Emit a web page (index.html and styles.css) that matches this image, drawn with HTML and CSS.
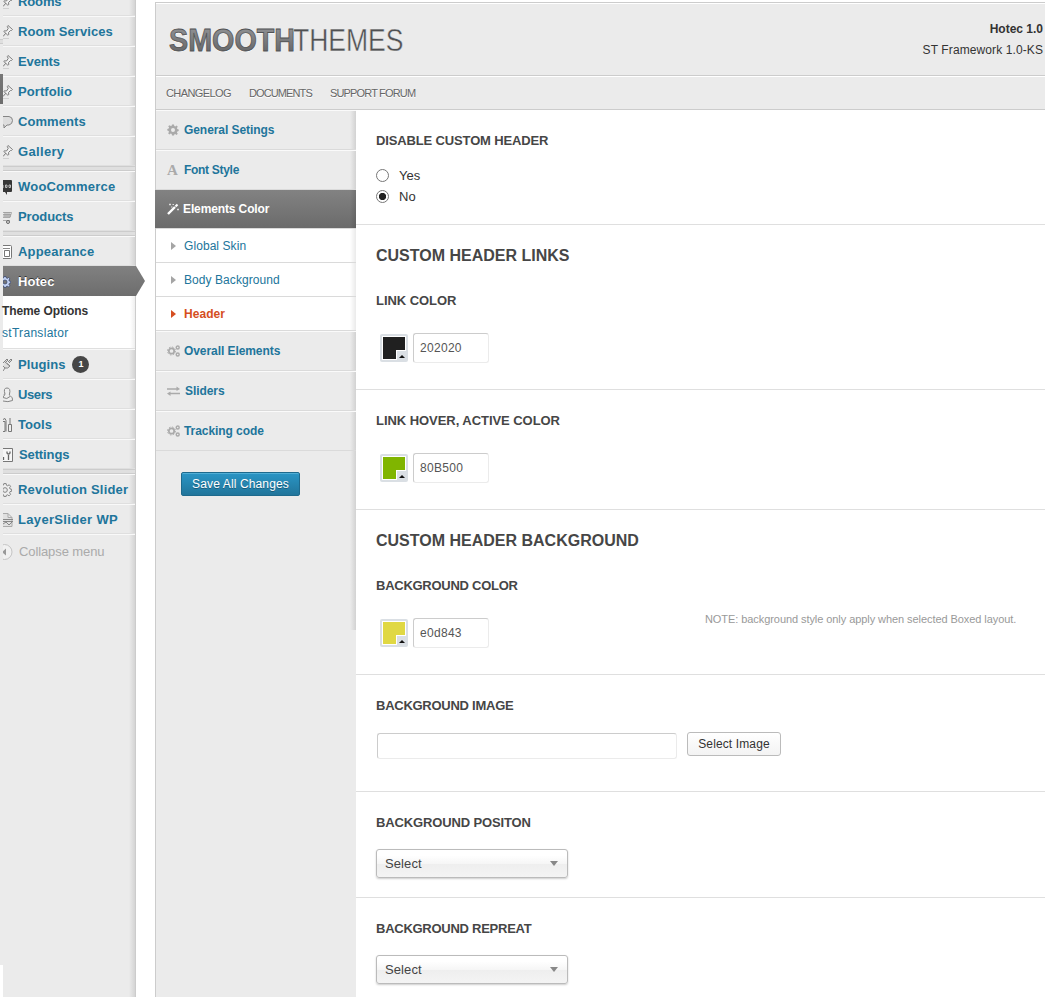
FILE: index.html
```html
<!DOCTYPE html>
<html lang="en">
<head>
<meta charset="utf-8">
<title>Theme Options</title>
<link rel="stylesheet" href="styles.css">
</head>
<body>
<svg class="defs" width="0" height="0">
  <defs>
    <linearGradient id="metal" x1="0" y1="0" x2="0" y2="1"><stop offset="0" stop-color="#98999c"/><stop offset="1" stop-color="#5c5d5f"/></linearGradient>
    <symbol id="pin" viewBox="0 0 12 16"><path d="M3 9L0 12.500" stroke="#777"/><path d="M5 1.500l4.500 4-1 1L7.500 6.500 5.500 8.500l.3 2-1 .7L.8 7.500l.5-.7 2.200.2L5.200 4.500 4.300 2.500z" fill="#f2f2f2" stroke="#7d7d7d"/><path d="M0 14.500h6" stroke="#d0d0d0"/></symbol>
    <symbol id="cog" viewBox="0 0 12 12"><path fill-rule="evenodd" d="M5 .5h2l.3 1.500 1 .4 1.300-.9 1.200 1.300-.9 1.300.4 1 1.400.3v1.700l-1.400.3-.4 1 .9 1.300-1.300 1.300-1.300-.9-1 .4L7 11.500H5l-.3-1.500-1-.4-1.300.9-1.300-1.300.9-1.300-.4-1L.3 6.600V5l1.400-.4.4-1-.9-1.300L2.500 1.200l1.300.9.9-.3zM6 4a2 2 0 100 4 2 2 0 000-4z"/></symbol>
    <symbol id="cogs" viewBox="0 0 13 12"><circle cx="4.500" cy="6" r="2.700" fill="none" stroke="#aaa" stroke-width="1.700"/><circle cx="4.500" cy="6" r="4" fill="none" stroke="#aaa" stroke-width="1" stroke-dasharray="1.600 1.540"/><circle cx="10.700" cy="2.500" r="1.500" fill="none" stroke="#aaa" stroke-width="1.400"/><circle cx="10.700" cy="9.500" r="1.500" fill="none" stroke="#aaa" stroke-width="1.400"/></symbol>
  </defs>
</svg>
<div class="page">
  <div class="edge"></div>
  <nav class="menu">
    <a class="item"><svg class="ic"><use href="#pin"/></svg><span class="tight">Rooms</span></a>
    <a class="item"><svg class="ic"><use href="#pin"/></svg><span>Room Services</span></a>
    <a class="item"><svg class="ic"><use href="#pin"/></svg><span class="tight">Events</span></a>
    <a class="item"><svg class="ic"><use href="#pin"/></svg><span>Portfolio</span></a>
    <a class="item"><svg class="ic" viewBox="0 0 12 16"><path d="M0 2.500h6q3.500.5 3.500 4t-3.500 4.500H4L1 14V11H0" fill="#ddd" stroke="#858585"/></svg><span>Comments</span></a>
    <a class="item"><svg class="ic"><use href="#pin"/></svg><span class="loose">Gallery</span></a>
    <div class="sep"></div>
    <a class="item"><svg class="ic" viewBox="0 0 12 16"><path d="M0 1h8q1 0 1 1v10q0 1-1 1H4v3l-2-3H0z" fill="#363636"/><path d="M0 6v3M2.500 6h1.500v2.500h-1.500zM6 6h1.500v2.500H6z" fill="none" stroke="#ccc" stroke-width=".9"/></svg><span class="mid">WooCommerce</span></a>
    <a class="item"><svg class="ic" viewBox="0 0 12 16"><path d="M0 3.500h8.500L7 8.500H0M0 5.500h8M0 7h8M2 3v5M4 3v5M6 3v5M0 11.500h7" fill="none" stroke="#999" stroke-width=".8"/><circle cx="5" cy="13" r="1.500" fill="#ddd" stroke="#666"/></svg><span class="tight">Products</span></a>
    <div class="sep"></div>
    <a class="item"><svg class="ic" viewBox="0 0 12 16"><path d="M0 1.500h7.500q1 0 1 1v11q0 1-1 1H0" fill="#fff" stroke="#777"/><path d="M0 4.500h7" stroke="#888"/><path d="M1.500 6.500h5v6h-5z" fill="#fff" stroke="#777"/></svg><span class="mid">Appearance</span></a>
    <a class="item current"><svg class="ic" viewBox="4 -2 12 16"><use href="#cog" width="12" height="12" fill="#c3d3f5" stroke="#33446c" stroke-width=".7"/></svg><span>Hotec</span></a>
    <div class="submenu"><b>Theme Options</b><span>stTranslator</span></div>
    <a class="item"><svg class="ic" viewBox="0 0 12 16"><path d="M0 6l4-4 1 1-2 2M5 5l3-3 1 1-3 3M2 5l5 4q-2 3-5 2l-2-2M2 11l-2 3M4 6.500l3 2.500" fill="#ddd" stroke="#858585"/></svg><span>Plugins</span><i class="badge">1</i></a>
    <a class="item"><svg class="ic" viewBox="0 0 12 16"><path d="M1 8q0-1 1-1Q0 1 4 1t2.500 6q-1 1 1 2 2.500 1.500 2 4.500-4.500 2-9.500.5M0 10l2-2.500M0 10.500q4 2.500 7-1" fill="#eee" stroke="#858585"/></svg><span class="tighter">Users</span></a>
    <a class="item"><svg class="ic" viewBox="0 0 12 16"><path d="M0 2.500l2-1 1 2v11M0 4.500h2v10H0M7 1v6M5.500 7.500h3v7h-3z" fill="#eee" stroke="#777"/></svg><span>Tools</span></a>
    <a class="item"><svg class="ic" viewBox="0 0 12 16"><path d="M0 1.500h9.500v13H0" fill="#f6f6f6" stroke="#777"/><path d="M.5 10v3M5.500 8v5M4 4.500v1q0 1.500 1.500 1.500T7 5.500v-1" fill="none" stroke="#666" stroke-width="1.300"/></svg><span class="tight shift">Settings</span></a>
    <div class="sep"></div>
    <a class="item"><svg class="ic" viewBox="5 -2 12 16"><use href="#cog" x="0" y="-1" width="14" height="14" fill="#eee" stroke="#7d7d7d" stroke-width=".8"/></svg><span class="mid">Revolution Slider</span></a>
    <a class="item"><svg class="ic" viewBox="0 0 12 16"><path d="M0 1.500h5l4 4v9H0M5 1.500v4h4" fill="#e0e0e0" stroke="#aaa"/><path d="M0 7.500h10M0 9.500h10M0 12l3-2 3 3 3-3" fill="none" stroke="#888"/></svg><span class="loose">LayerSlider WP</span></a>
    <div class="collapse"><svg class="ic" viewBox="0 0 12 16"><circle cx="1.500" cy="8" r="7.500" fill="#f1f1f1" stroke="#c4c4c4"/><path d="M-1 8l4-3.500v7z" fill="#999"/></svg><span>Collapse menu</span></div>
  </nav>
  <main class="panel">
    <header class="head">
      <svg class="logo" width="240" height="36" viewBox="0 0 240 36">
        <g font-family="Liberation Sans, Arial, sans-serif" font-size="31">
          <g fill="#fff" transform="translate(0 1)"><text x="1" y="27" font-weight="700" textLength="126" lengthAdjust="spacingAndGlyphs">SMOOTH</text></g>
          <text x="1" y="27" font-weight="700" textLength="126" lengthAdjust="spacingAndGlyphs" fill="url(#metal)" stroke="#505153" stroke-width=".8">SMOOTH</text>
          <text x="125" y="27" textLength="110.500" lengthAdjust="spacingAndGlyphs" fill="#505153" stroke="#ebebeb" stroke-width=".4">THEMES</text>
        </g>
      </svg>
      <div class="version"><b>Hotec 1.0</b><span>ST Framework 1.0-KS</span></div>
    </header>
    <div class="links"><a class="l1">CHANGELOG</a><a class="l2">DOCUMENTS</a><a class="l3">SUPPORT FORUM</a></div>
    <div class="body">
      <aside class="side">
        <a class="tab"><svg class="ti" viewBox="0 0 12 12" fill="#aaa"><use href="#cog"/></svg><span>General Setings</span></a>
        <a class="tab"><span class="ti letter">A</span><span class="t-font">Font Style</span></a>
        <a class="tab on"><svg class="ti" viewBox="0 0 12 12"><path d="M1 11l7-7" stroke="#fff" stroke-width="2.400"/><path d="M8.500 3.500l2-2" stroke="#fff" stroke-width="2.200"/><path d="M2 1.500h2M3 .5v2M5.500 1.500h1.500M10 6.500h2M11 5.500v2M4 4h1.500" stroke="#ddd"/></svg><span>Elements Color</span></a>
        <a class="sub">Global Skin</a>
        <a class="sub">Body Background</a>
        <a class="sub sel">Header</a>
        <a class="tab"><svg class="ti wide"><use href="#cogs"/></svg><span>Overall Elements</span></a>
        <a class="tab"><svg class="ti wide" viewBox="0 0 13 12"><path d="M0 4h10M3 8.500h10" stroke="#aaa" stroke-width="1.500"/><path d="M9.500 1.500L13 4l-3.500 2zM3.500 6.500L0 8.500 3.500 11z" fill="#aaa"/></svg><span class="shift">Sliders</span></a>
        <a class="tab"><svg class="ti wide"><use href="#cogs"/></svg><span>Tracking code</span></a>
        <button class="save">Save All Changes</button>
      </aside>
      <div class="content">
        <section class="s1"><h4>DISABLE CUSTOM HEADER</h4>
          <div class="radios"><label><i class="radio"></i>Yes</label><label><i class="radio checked"></i>No</label></div></section>
        <section class="s2"><h3>CUSTOM HEADER LINKS</h3><h4 class="h-wide">LINK COLOR</h4>
          <div class="color"><div class="swatch"><i class="c-dark"></i></div><div class="field">202020</div></div></section>
        <section class="s3"><h4 class="h-wide">LINK HOVER, ACTIVE COLOR</h4>
          <div class="color"><div class="swatch"><i class="c-green"></i></div><div class="field">80B500</div></div></section>
        <section class="s2"><h3>CUSTOM HEADER BACKGROUND</h3><h4 class="h-narrow">BACKGROUND COLOR</h4>
          <div class="color"><div class="swatch"><i class="c-yellow"></i></div><div class="field">e0d843</div><p class="note">NOTE: background style only apply when selected Boxed layout.</p></div></section>
        <section class="s4"><h4 class="h-narrow">BACKGROUND IMAGE</h4>
          <div class="image"><div class="field long"></div><button class="pick">Select Image</button></div></section>
        <section class="s5"><h4>BACKGROUND POSITON</h4><div class="select"><span>Select</span></div></section>
        <section class="s5"><h4 class="h-narrow">BACKGROUND REPREAT</h4><div class="select"><span>Select</span></div></section>
      </div>
    </div>
  </main>
</div>
</body>
</html>
```
FILE: styles.css
```css
* { box-sizing: border-box; }
body { margin: 0; background: #fff; color: #333; font: 12px/20px "Liberation Sans", Arial, sans-serif; }
.defs { display: block; }
.page { display: flex; width: 1045px; height: 997px; overflow: hidden; }
.edge { width: 3px; height: 965px; background: linear-gradient(#ebebeb 39px, #ccc 39px, #ccc 40px, #dfdfdf 40px, #dfdfdf 43px, #ccc 43px, #ccc 44px, #ebebeb 44px, #ebebeb 74px, #777 74px, #6d6d6d 104px, #ebebeb 104px); }
.menu { width: 133px; height: 1011px; margin-top: -14px; border-right: 1px solid #ccc; background: linear-gradient(to left, #d4d4d4, #ebebeb 6px); }
.item { display: flex; height: 30px; padding-top: 1px; border-top: 1px solid #f9f9f9; border-bottom: 1px solid #dfdfdf; align-items: center; color: #21759b; font-size: 13px; font-weight: 700; letter-spacing: .07px; white-space: nowrap; }
.item > span { padding-top: 1px; }
.item .tight { letter-spacing: -.12px; }
.item .tighter { letter-spacing: -.4px; }
.item .mid { letter-spacing: .2px; }
.item .loose { letter-spacing: .33px; }
.shift { padding-left: 1px; }
.ic { width: 12px; height: 16px; margin-right: 3px; flex: none; }
.sep { height: 5px; background: #dfdfdf; border-top: 1px solid #ccc; border-bottom: 1px solid #ccc; }
.current { position: relative; padding-top: 0; border-color: #808080 transparent #6d6d6d; border-bottom: 0; background: linear-gradient(#808080, #6d6d6d); color: #fff; text-shadow: 0 -1px 0 #333; width: 133px; }
.current > span { padding: 0; }
.current::after { content: ""; position: absolute; left: 133px; top: -1px; width: 9px; height: 30px; background: linear-gradient(#808080, #6d6d6d); clip-path: polygon(0 0, 100% 50%, 0 100%); }
.submenu { display: flex; flex-direction: column; gap: 2px; height: 53px; padding-top: 5px; border-bottom: 1px solid #dfdfdf; background: linear-gradient(to left, #eee, #fff 5px); color: #21759b; white-space: nowrap; }
.submenu b { color: #333; margin-left: -1px; letter-spacing: -.1px; }
.submenu span { margin-left: -1px; letter-spacing: .3px; }
.badge { margin: 0 0 0 7px; width: 17px; height: 17px; border-radius: 9px; background: #464646; color: #fff; font: 700 9px/17px "Liberation Sans", Arial, sans-serif; letter-spacing: 0; text-align: center; }
.collapse { display: flex; align-items: center; height: 34px; border-top: 1px solid #f9f9f9; color: #aaa; font-size: 13px; letter-spacing: -.1px; }
.collapse .ic { margin-right: 4px; }
.panel { flex: none; width: 890px; height: 995px; margin: 2px 0 0 19px; border-left: 1px solid #ccc; border-top: 1px solid #ccc; }
.head { display: flex; justify-content: space-between; height: 73px; border-top: 1px solid #fff; border-bottom: 1px solid #ccc; background: #ebebeb; }
.logo { margin: 20px 0 0 12px; }
.version { display: flex; flex-direction: column; padding: 15px 2px 0 0; gap: 1px; text-align: right; }
.version span { letter-spacing: .1px; }
.links { display: flex; gap: 18px; height: 34px; padding: 6px 10px; border-top: 1px solid #fff; border-bottom: 1px solid #ccc; background: #ebebeb; color: #666; font-size: 11px; text-shadow: 0 1px 0 #fff; }
.l1 { letter-spacing: -.6px; } .l2 { letter-spacing: -.88px; } .l3 { letter-spacing: -.83px; }
.body { display: flex; height: 887px; }
.side { display: flex; flex-direction: column; flex: none; width: 200px; background: linear-gradient(to left, #d2d2d2, #ebebeb 6px) 0 0 / 100% 520px no-repeat #ebebeb; }
.tab { display: flex; align-items: center; height: 40px; padding-left: 11px; border-top: 1px solid #fafafa; border-bottom: 1px solid #dadada; color: #21759b; font-weight: 700; letter-spacing: -.07px; }
.t-font { letter-spacing: -.3px; }
.ti { width: 12px; height: 12px; margin-right: 5px; flex: none; }
.ti.wide { width: 13px; margin-right: 4px; }
.letter { color: #aaa; font: 700 15px/12px "Liberation Serif", serif; }
.tab.on { height: 38px; margin-left: -1px; padding-left: 12px; border: 0; background: linear-gradient(to left, rgba(0,0,0,.12), transparent 6px), linear-gradient(#828282, #6b6b6b); color: #fff; letter-spacing: -.12px; }
.tab.on .ti { margin-right: 4px; }
.sub { display: flex; align-items: center; height: 34px; border-bottom: 1px solid #dadada; background: linear-gradient(to left, #eaeaea, #fff 6px); color: #21759b; letter-spacing: .07px; }
.tab.on + .sub { height: 35px; border-top: 1px solid #dadada; }
.sub::before { content: ""; margin: 0 8px 0 15px; border: solid transparent; border-width: 4px 0 4px 5px; border-left-color: #a5a5a5; }
.sub.sel { color: #d54e21; font-weight: 700; }
.sub.sel::before { border-left-color: #d54e21; }
.save { width: 119px; height: 24px; margin: 21px 0 0 25px; padding: 0; border: 1px solid #1e6a8d; border-radius: 2px; background: linear-gradient(#2a95c5, #21759b); box-shadow: inset 0 1px 0 rgba(120,200,230,.5); color: #fff; font: 12px/20px "Liberation Sans", Arial, sans-serif; letter-spacing: .13px; text-shadow: 0 1px 0 rgba(0,0,0,.3); }
.content { flex: 1; min-width: 0; }
section { border-bottom: 1px solid #dfdfdf; padding: 21px 0 0 20px; }
h3, h4 { margin: 0; color: #464646; line-height: 20px; }
h3 { font-size: 16px; margin-bottom: 25px; }
h4 { font-size: 13px; margin-bottom: -1px; letter-spacing: -.14px; }
.h-wide { letter-spacing: -.05px; }
.h-narrow { letter-spacing: -.26px; }
.s1 { height: 115px; } .s2 { height: 165px; } .s3 { height: 120px; } .s4 { height: 117px; } .s5 { height: 106px; }
.radios { padding-top: 15px; font-size: 13px; }
.radios label { display: flex; align-items: center; height: 21px; gap: 10px; }
.radio { width: 13px; height: 13px; border: 1px solid #777; border-radius: 50%; background: #fff; }
.radio.checked { background: radial-gradient(circle, #222 3.300px, #fff 4px); }
.color { display: flex; padding: 23px 0 0 4px; }
.swatch { width: 28px; height: 28px; margin: 1px 5px 0 0; padding: 2px; border-radius: 2px; background: #dadfe4; }
.swatch i { display: block; position: relative; width: 24px; height: 24px; border: 1px solid #fff; }
.swatch i::before { content: ""; position: absolute; right: -1px; bottom: -1px; width: 9px; height: 9px; border: solid #fff; border-width: 1px 0 0 1px; background: #dadfe4; }
.swatch i::after { content: ""; position: absolute; right: 0; bottom: 1px; border: solid transparent; border-width: 0 3px 3px; border-bottom-color: #111; }
.c-dark { background: #202020; } .c-green { background: #80b500; } .c-yellow { background: #e0d843; }
.field { width: 76px; height: 30px; padding: 0 6px; border: 1px solid #ebebeb; border-top-color: #ccc; border-left-color: #ccc; border-radius: 3px; color: #555; line-height: 28px; letter-spacing: .3px; }
.note { margin: -9px 0 0 216px; color: #999; font-size: 11px; letter-spacing: -.07px; white-space: nowrap; }
.image { display: flex; padding: 17px 0 0 1px; gap: 10px; }
.field.long { width: 300px; height: 26px; margin-top: 1px; }
.pick { width: 94px; height: 24px; padding: 0; border: 1px solid #bbb; border-radius: 3px; background: linear-gradient(#fff, #f3f3f3); color: #333; font: 12px/20px "Liberation Sans", Arial, sans-serif; letter-spacing: .12px; }
.select { display: flex; align-items: center; justify-content: space-between; width: 192px; height: 29px; margin-top: 17px; padding: 0 9px 0 8px; border: 1px solid #bbb; border-radius: 3px; background: linear-gradient(#fff 20%, #f6f6f6 50%, #eee 52%, #f4f4f4 100%); box-shadow: 0 1px 2px rgba(0,0,0,.2); color: #444; font-size: 13px; letter-spacing: .1px; }
.select::after { content: ""; border: solid transparent; border-width: 5px 4px 0; border-top-color: #888; }
```
